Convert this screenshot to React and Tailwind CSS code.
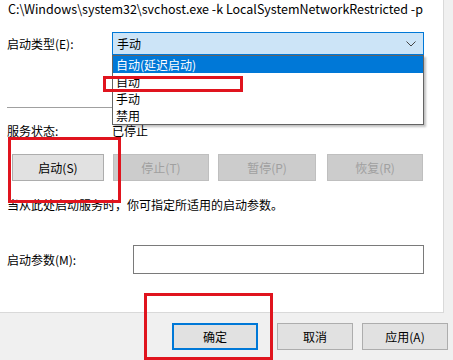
const font = { fontFamily: '"Noto Sans CJK SC", "Noto Sans", sans-serif' };

function Btn({ children, className = "", disabled }) {
  return (
    <div
      className={`flex h-[27px] items-center justify-center border text-[12px] ${
        disabled
          ? "border-[#bfbfbf] bg-[#cccccc] text-[#a0a0a0]"
          : "border-[#adadad] bg-[#e1e1e1] text-[#000]"
      } ${className}`}
    >
      {children}
    </div>
  );
}

export default function App() {
  const options = ["自动(延迟启动)", "自动", "手动", "禁用"];
  return (
    <div
      className="relative h-[360px] w-[453px] overflow-hidden bg-[#f0f0f0] text-[12px] text-black"
      style={font}
    >
      {/* panel */}
      <div className="h-[313px] w-[444px] border-r border-b border-[#d9d9d9] bg-white">
        <div className="pl-[8px] pt-[1px] leading-[16px] text-[12.5px] whitespace-nowrap">
          C:\Windows\system32\svchost.exe -k LocalSystemNetworkRestricted -p
        </div>

        <div className="mt-[15px] flex h-[23px] items-center">
          <div className="w-[112px] pl-[7px]">启动类型(E):</div>
          <div className="flex h-[23px] w-[312px] items-center justify-between border border-[#0078d7] bg-[#cce4f7] pl-[4px] pr-[6px]">
            <span>手动</span>
            <svg width="10" height="6" viewBox="0 0 10 6" className="mr-[1px]">
              <path d="M0.5 0.5 L5 5 L9.5 0.5" fill="none" stroke="#444" strokeWidth="1" />
            </svg>
          </div>
        </div>

        <div className="mt-[52px] ml-[7px] h-px w-[417px] bg-[#a0a0a0]" />

        <div className="mt-[15px] flex leading-[16px]">
          <div className="w-[112px] pl-[7px]">服务状态:</div>
          <div>已停止</div>
        </div>

        <div className="mt-[15px] flex pl-[12px]">
          <Btn className="w-[92px]">启动(S)</Btn>
          <Btn className="ml-[9px] w-[96px]" disabled>停止(T)</Btn>
          <Btn className="ml-[9px] w-[98px]" disabled>暂停(P)</Btn>
          <Btn className="ml-[11px] w-[96px]" disabled>恢复(R)</Btn>
        </div>

        <div className="mt-[16px] pl-[7px] leading-[16px]">
          当从此处启动服务时，你可指定所适用的启动参数。
        </div>

        <div className="mt-[32px] flex items-center">
          <div className="w-[133px] pl-[7px]">启动参数(M):</div>
          <div className="h-[29px] w-[291px] border border-[#7a7a7a] bg-white" />
        </div>
      </div>

      {/* bottom buttons */}
      <div className="mt-[10px] flex">
        <div className="ml-[172px] flex h-[27px] w-[86px] items-center justify-center border-2 border-[#0078d7] bg-[#e1e1e1]">
          确定
        </div>
        <Btn className="ml-[19px] w-[76px]">取消</Btn>
        <Btn className="ml-[9px] w-[86px]">应用(A)</Btn>
      </div>

      {/* dropdown list */}
      <div className="absolute left-[112px] top-[55px] w-[312px] border border-[#646464] bg-white shadow-[2px_2px_2px_rgba(0,0,0,0.25)]">
        {options.map((o, i) => (
          <div
            key={o}
            className={`h-[17px] pl-[3px] leading-[17px] ${
              i === 0 ? "bg-[#0078d7] text-white" : "text-black"
            }`}
          >
            {o}
          </div>
        ))}
      </div>

      {/* red highlight boxes */}
      <div className="absolute left-[103px] top-[76px] h-[16px] w-[140px] border-[3px] border-[#e0141e]" />
      <div className="absolute left-[8px] top-[137px] h-[66px] w-[113px] border-[3px] border-[#e0141e]" />
      <div className="absolute left-[144px] top-[293px] h-[67px] w-[129px] border-[3px] border-[#e0141e]" />
    </div>
  );
}
